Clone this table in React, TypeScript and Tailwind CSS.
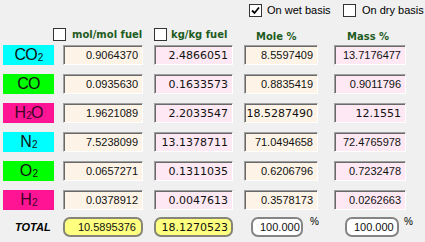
import React from "react";

type Row = {
  base: string;
  sub?: string;
  tail?: string;
  color: string;
  text: string;
  v: [string, string, string, string];
  verd: [boolean, boolean, boolean, boolean];
};

const rows: Row[] = [
  { base: "CO", sub: "2", color: "bg-[#00ffff]", text: "text-[#101010]", v: ["0.9064370", "2.4866051", "8.5597409", "13.7176477"], verd: [false, true, false, false] },
  { base: "CO", color: "bg-[#00ff00]", text: "text-[#101010]", v: ["0.0935630", "0.1633573", "0.8835419", "0.9011796"], verd: [false, true, false, false] },
  { base: "H", sub: "2", tail: "O", color: "bg-[#ff1493]", text: "text-[#3a0426]", v: ["1.9621089", "2.2033547", "18.5287490", "12.1551"], verd: [false, true, true, true] },
  { base: "N", sub: "2", color: "bg-[#00ffff]", text: "text-[#101010]", v: ["7.5238099", "13.1378711", "71.0494658", "72.4765978"], verd: [false, true, false, false] },
  { base: "O", sub: "2", color: "bg-[#00ff00]", text: "text-[#101010]", v: ["0.0657271", "0.1311035", "0.6206796", "0.7232478"], verd: [false, true, false, false] },
  { base: "H", sub: "2", color: "bg-[#ff1493]", text: "text-[#3a0426]", v: ["0.0378912", "0.0047613", "0.3578173", "0.0262663"], verd: [false, true, false, false] },
];

const tahoma = "font-['Liberation_Sans',Arial,sans-serif]";
const verdana = "font-['DejaVu_Sans',Verdana,sans-serif]";

function Check({ checked }: { checked?: boolean }) {
  return (
    <div className="w-[13px] h-[13px] shrink-0 bg-white border border-[#333333] flex items-center justify-center">
      {checked && (
        <svg width="9" height="9" viewBox="0 0 9 9">
          <path d="M1 4.5 L3.5 7 L8 1.5" fill="none" stroke="#000" strokeWidth="1.8" />
        </svg>
      )}
    </div>
  );
}

function Cell({ value, bg, w, ml, verd }: { value: string; bg: string; w: string; ml: string; verd: boolean }) {
  return (
    <div
      className={`${w} ${ml} ${bg} h-[20px] shrink-0 flex items-center justify-end pr-[4px] border border-t-[#a0a0a0] border-l-[#a0a0a0] border-b-white border-r-white shadow-[inset_1px_1px_0_#696969] text-[11px] text-[#111111] leading-none ${verd ? verdana : tahoma}`}
    >
      {value}
    </div>
  );
}

export default function App() {
  const widths = ["w-[80px]", "w-[79px]", "w-[74px]", "w-[72px]"];
  const mls = ["ml-[9px]", "ml-[11px]", "ml-[11px]", "ml-[16px]"];
  const bgs = ["bg-[#fdf4e7]", "bg-[#fde8f3]", "bg-[#fdf4e7]", "bg-[#fde8f3]"];
  const header = "font-['DejaVu_Sans',Verdana,sans-serif] font-bold text-[10px] text-[#1f5c1f] leading-none whitespace-nowrap";
  return (
    <div className={`w-[425px] h-[242px] bg-[#f0f0f0] overflow-hidden ${tahoma}`}>
      {/* top basis checkboxes */}
      <div className="flex items-center h-[13px] mt-[4px] text-[11px] text-black leading-none whitespace-nowrap">
        <div className="ml-[249px] w-[94px] flex items-center">
          <Check checked />
          <span className="ml-[5px]">On wet basis</span>
        </div>
        <div className="w-[80px] flex items-center">
          <Check />
          <span className="ml-[6px]">On dry basis</span>
        </div>
      </div>

      {/* column headers */}
      <div className="flex items-center h-[13px] mt-[11px]">
        <div className="ml-[53px] w-[101px] flex items-center">
          <Check />
          <span className={`ml-[6px] ${header}`}>mol/mol fuel</span>
        </div>
        <div className="w-[90px] flex items-center">
          <Check />
          <span className={`ml-[4px] ${header}`}>kg/kg fuel</span>
        </div>
        <div className="w-[90px] pl-[12px]">
          <span className={header}>Mole %</span>
        </div>
        <div className="w-[72px] pl-[13px]">
          <span className={header}>Mass %</span>
        </div>
      </div>

      {/* species rows */}
      <div className="flex flex-col gap-[9px] mt-[4px]">
        {rows.map((r, i) => (
          <div key={i} className="flex h-[20px]">
            <div
              className={`ml-[3px] w-[51px] h-[20px] shrink-0 ${r.color} ${r.text} flex items-center justify-center text-[16px] leading-none tracking-[-0.8px]`}
            >
              <span>{r.base}</span>
              {r.sub && <span className="text-[10px] relative top-[3px] ml-[1px]">{r.sub}</span>}
              {r.tail && <span>{r.tail}</span>}
            </div>
            {r.v.map((v, j) => (
              <Cell key={j} value={v} bg={bgs[j]} w={widths[j]} ml={mls[j]} verd={r.verd[j]} />
            ))}
          </div>
        ))}
      </div>

      {/* total row */}
      <div className="flex h-[20px] mt-[7px] items-center">
        <div className="ml-[3px] w-[51px] pl-[12px] font-bold italic text-[11px] text-black leading-none">TOTAL</div>
        <div className={`ml-[9px] w-[80px] h-[20px] rounded-[7px] border-2 border-[#858578] bg-[#ffff80] flex items-center justify-end pr-[5px] text-[11px] text-[#111111] leading-none ${tahoma}`}>
          10.5895376
        </div>
        <div className={`ml-[11px] w-[79px] h-[20px] rounded-[7px] border-2 border-[#858578] bg-[#ffff80] flex items-center justify-end pr-[3px] text-[11px] text-[#111111] leading-none ${verdana}`}>
          18.1270523
        </div>
        <div className="ml-[18px] w-[52px] h-[20px] rounded-[7px] border-2 border-[#858585] bg-white flex items-center pl-[7px] text-[11px] text-[#111111] leading-none">
          100.000
        </div>
        <span className="ml-[7px] self-start text-[10px] leading-none text-black">%</span>
        <div className="ml-[26px] w-[54px] h-[20px] rounded-[7px] border-2 border-[#858585] bg-white flex items-center pl-[7px] text-[11px] text-[#111111] leading-none">
          100.000
        </div>
        <span className="ml-[5px] self-start text-[10px] leading-none text-black">%</span>
      </div>
    </div>
  );
}
